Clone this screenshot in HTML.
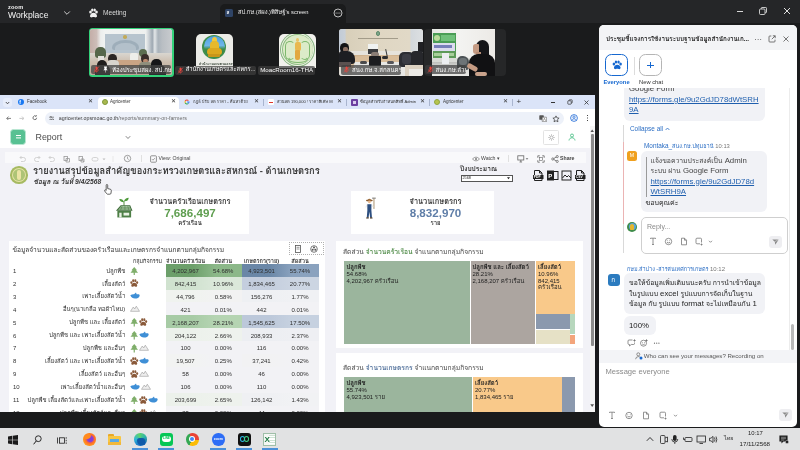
<!DOCTYPE html>
<html lang="th">
<head>
<meta charset="utf-8">
<title>Zoom Meeting</title>
<style>
html,body{margin:0;padding:0;}
body{position:relative;width:800px;height:450px;overflow:hidden;background:#1a1b1c;font-family:"Liberation Sans","Loma","Noto Sans Thai",sans-serif;}
#root{position:absolute;left:-4px;top:-4px;width:808px;height:458px;overflow:hidden;background:#1a1b1c;filter:blur(.35px);}
#stage{left:4px;top:4px;width:800px;height:450px;}
#root div,#root span.a,#root svg{position:absolute;box-sizing:border-box;}
.t{white-space:nowrap;line-height:1;}
.b{font-weight:bold;}
/* zoom top */
#ztitle{left:0;top:0;width:800px;height:23px;background:#252628;}
#ztab{left:220px;top:4px;width:126px;height:20px;background:#1a1b1c;border-radius:5px 5px 0 0;}
.vlabel{height:9.300px;background:rgba(63,63,63,.72);border-radius:2px;color:#fff;font-size:6.100px;overflow:hidden;}
.vlabel .t{top:1.600px;}
.scene{filter:blur(.55px);}
/* chrome */
#chrome{left:0;top:95px;width:595.300px;height:316.600px;background:#f2f2f7;overflow:hidden;}
#tabs{left:0;top:0;width:595px;height:14px;background:#dbe4f8;}
#tabs .t{font-size:4.5px;color:#333;top:5px;}
#tabs .x{font-size:5.6px;color:#333;top:4.2px;}
#tabs .sep{width:1px;height:7px;top:3.700px;background:#a9b5cf;}
#addr{left:0;top:14px;width:595px;height:17px;background:#fff;}
#pill{left:45.300px;top:3px;width:519px;height:12.500px;border-radius:7px;background:#edf1f9;}
#apphead{left:0;top:31px;width:590px;height:21.500px;background:#fff;}
/* chat */
#chat{left:599px;top:25px;width:198px;height:402px;background:#fff;border-radius:5px;overflow:hidden;}
#chead{left:0;top:0;width:198px;height:25px;background:#f3f4f6;}
.bub{background:#f1f2f6;border-radius:6px;}
.ct{font-size:7.8px;color:#2a2a2a;white-space:nowrap;line-height:1;}
.th{font-size:6.8px;}
.lnk{color:#1f5fae;text-decoration:underline;}
/* taskbar */
#task{left:0;top:428px;width:800px;height:22px;background:#e1e2e3;}
</style>
</head>
<body>
<div id="root">
<div id="stage">
<div style="left:-4px;top:-4px;width:808px;height:27px;background:#252628;"></div>
<div style="left:-4px;top:95px;width:6px;height:316.600px;background:linear-gradient(180deg,#dbe4f8 0,#dbe4f8 14px,#fff 14px,#fff 52.500px,#f2f2f7 52.500px,#f2f2f7 100%);"></div>
<div style="left:-4px;top:428px;width:808px;height:30px;background:#e1e2e3;"></div>
<!-- ===== Zoom title bar ===== -->
<div id="ztitle">
  <div class="t" style="left:8px;top:4.6px;font-size:5.6px;color:#f2f2f2;font-weight:bold;letter-spacing:.2px;">zoom</div>
  <div class="t" style="left:8px;top:10.800px;font-size:8.6px;color:#f5f5f5;">Workplace</div>
  <svg style="left:62.500px;top:9.500px" width="8" height="6" viewBox="0 0 8 6"><path d="M1.2 1.5 L4 4.3 L6.8 1.5" fill="none" stroke="#cfcfcf" stroke-width="1"/></svg>
  <svg style="left:88px;top:7.800px" width="11" height="11" viewBox="0 0 22 22"><g fill="#f0f0f0"><ellipse cx="5" cy="8" rx="2.6" ry="3.2"/><ellipse cx="17" cy="8" rx="2.6" ry="3.2"/><ellipse cx="8.6" cy="4" rx="2.4" ry="3"/><ellipse cx="13.4" cy="4" rx="2.4" ry="3"/><path d="M11 9.5c-4 0-7 3.5-7 6.6 0 2.6 2.4 3.2 4.2 2.6 1.2-.4 1.8-.6 2.8-.6s1.600.2 2.800.6c1.800.6 4.200 0 4.200-2.600 0-3.100-3-6.600-7-6.600z"/></g></svg>
  <div class="t" style="left:103px;top:9.800px;font-size:6.6px;color:#d8d8d8;">Meeting</div>
  <div id="ztab">
    <div style="left:5px;top:5px;width:8px;height:8px;border-radius:1.5px;background:#2f4466;"></div>
    <div class="t" style="left:6.6px;top:6.6px;font-size:4.5px;color:#fff;font-weight:bold;">ส</div>
    <div class="t" style="left:18px;top:5.800px;font-size:5.8px;color:#ececec;">สป.กษ.(สผง.)พิสิษฐ์'s screen</div>
    <svg style="left:113.300px;top:3.600px" width="10" height="10" viewBox="0 0 20 20"><circle cx="10" cy="10" r="8" fill="none" stroke="#e6e6e6" stroke-width="1.6"/><circle cx="6.200" cy="10" r="1.100" fill="#e6e6e6"/><circle cx="10" cy="10" r="1.100" fill="#e6e6e6"/><circle cx="13.800" cy="10" r="1.100" fill="#e6e6e6"/></svg>
  </div>
  <!-- window controls -->
  <div style="left:737px;top:10.500px;width:6px;height:1px;background:#d8d8d8;"></div>
  <svg style="left:758px;top:6px" width="10" height="10" viewBox="0 0 10 10"><rect x="1.500" y="3" width="5.5" height="5.500" rx="1" fill="none" stroke="#d8d8d8" stroke-width=".9"/><path d="M3.300 3V2.200q0-.7.700-.7h3.800q.7 0 .7.700v3.800q0 .7-.7.700h-.8" fill="none" stroke="#d8d8d8" stroke-width=".9"/></svg>
  <svg style="left:783px;top:7px" width="8" height="8" viewBox="0 0 8 8"><path d="M1 1L7 7M7 1L1 7" stroke="#e0e0e0" stroke-width="1"/></svg>
</div>

<!-- ===== video strip ===== -->
<!-- tile 1 (active speaker) -->
<div style="left:88.500px;top:28.200px;width:85px;height:48.500px;border-radius:3.500px;background:#33d27a;overflow:hidden;">
  <div style="left:1.300px;top:1.300px;width:82.400px;height:45.900px;border-radius:2.500px;overflow:hidden;background:#e8ebea;"><div class="scene" style="left:0;top:0;width:82.400px;height:45.900px;">
    <div style="left:0;top:0;width:82px;height:26px;background:linear-gradient(90deg,#c4aea8 0,#cdbdb8 8%,#eceeed 13%,#f1f3f2 18%,#eef0ef 68%,#c9cfd4 72%,#9ea8b2 76%,#e3e6e8 79%,#aab3bb 83%,#b9bec3 88%,#c8cbce 100%);"></div>
    <div style="left:15.500px;top:5px;width:39.500px;height:19.500px;background:#b7c4ce;"></div>
    <div style="left:22px;top:10.500px;width:27px;height:10px;background:#9aaab6;border-radius:13px 13px 2px 2px / 8px 8px 2px 2px;opacity:.85;"></div>
    <div style="left:25px;top:13.500px;width:21px;height:7px;background:#b3c0ca;border-radius:10px 10px 0 0 / 5px 5px 0 0;"></div>
    <div style="left:33.500px;top:6px;width:3.500px;height:3.500px;background:#c2aa58;border-radius:50%;"></div>
    <div style="left:0;top:24px;width:82px;height:22px;background:linear-gradient(180deg,#d9d6d0 0,#cdbfb0 40%,#b9a795 100%);"></div>
    <div style="left:5px;top:18px;width:11px;height:11px;background:#55664a;border-radius:5px 5px 3px 3px;"></div>
    <div style="left:8px;top:27px;width:6px;height:5px;background:#e3e1dc;"></div>
    <div style="left:49.500px;top:20px;width:8px;height:8px;background:#5c6e50;border-radius:4px;"></div>
    <div style="left:40.500px;top:23.500px;width:8px;height:12px;background:#eeeeea;border-radius:2px;"></div>
    <div style="left:24px;top:31px;width:28px;height:6px;background:#caa484;border-radius:3px;"></div>
    <div style="left:18.500px;top:25px;width:8.500px;height:8.500px;background:#2c2623;border-radius:50%;"></div>
    <div style="left:17px;top:31px;width:12px;height:9px;background:#d8d4cd;border-radius:4px 4px 0 0;"></div>
    <div style="left:7px;top:30.500px;width:10.500px;height:9px;background:#1f1d1c;border-radius:5px 5px 2px 2px;"></div>
    <div style="left:5px;top:36px;width:15px;height:10px;background:#3b3937;border-radius:5px 5px 0 0;"></div>
    <div style="left:51px;top:24.500px;width:8.500px;height:9px;background:#3a2e2a;border-radius:50%;"></div>
    <div style="left:53px;top:29.500px;width:5px;height:4px;background:#b98a6e;border-radius:2px;"></div>
    <div style="left:49px;top:33px;width:13px;height:9px;background:#8f8f7c;border-radius:4px 4px 0 0;"></div>
    <div style="left:61.500px;top:30px;width:11px;height:9px;background:#161618;border-radius:5px 5px 2px 2px;"></div>
    <div style="left:59px;top:36px;width:17px;height:10px;background:#2c2c2e;border-radius:6px 6px 0 0;"></div>
  </div></div>
  <div class="vlabel" style="left:2px;top:36.800px;width:80.500px;">
    <svg style="left:2px;top:1.200px" width="7" height="7" viewBox="0 0 14 14"><rect x="5" y="1" width="4" height="8" rx="2" fill="#e5463f"/><path d="M3 7a4 4 0 0 0 8 0M7 11v2" stroke="#e5463f" stroke-width="1.300" fill="none"/><path d="M2 13L12 1" stroke="#e5463f" stroke-width="1.400"/></svg>
    <svg style="left:11px;top:1.200px" width="7" height="7" viewBox="0 0 14 14"><path d="M4 1h6l-1 5 2.500 2.500h-9L5 6z M6.500 8.500h1V13h-1z" fill="#fff"/></svg>
    <div class="t" style="left:21.500px;">ห้องประชุมสผง. สป.กษ</div>
  </div>
</div>
<!-- tile 2 avatar -->
<div style="left:195.800px;top:33.900px;width:37.400px;height:34px;border-radius:5px 5px 0 0;background:#ecece7;overflow:hidden;">
  <div style="left:6.700px;top:.8px;width:24px;height:24px;border-radius:50%;background:#3f8f4c;"></div>
  <div style="left:8.200px;top:2.300px;width:21px;height:21px;border-radius:50%;background:linear-gradient(180deg,#4f9fe0 0,#6fb6ea 45%,#3f8f4c 62%,#2f7a3e 100%);"></div>
  <div style="left:16.200px;top:2.800px;width:5px;height:6px;border-radius:50% 50% 40% 40%;background:#efc83c;"></div>
  <div style="left:14.200px;top:7.500px;width:9px;height:9px;border-radius:4px 4px 2px 2px;background:#e6b92c;"></div>
  <div style="left:11.200px;top:14.500px;width:15px;height:7px;border-radius:4px 4px 3px 3px;background:#dca81f;"></div>
  <div style="left:12.700px;top:20.500px;width:12px;height:3px;border-radius:1px;background:#c9961a;"></div>
  <div class="t b" style="left:3px;top:28.800px;font-size:3.600px;color:#2c3a2c;">สำนักงานเกษตรและสหกรณ์</div>
</div>
<div class="vlabel" style="left:175.200px;top:65.500px;width:80.800px;">
  <svg style="left:2px;top:1.200px" width="7" height="7" viewBox="0 0 14 14"><rect x="5" y="1" width="4" height="8" rx="2" fill="#e5463f"/><path d="M3 7a4 4 0 0 0 8 0M7 11v2" stroke="#e5463f" stroke-width="1.300" fill="none"/><path d="M2 13L12 1" stroke="#e5463f" stroke-width="1.400"/></svg>
  <div class="t" style="left:10.500px;font-size:5.800px;">สำนักงานเกษตรและสหกร...</div>
</div>
<!-- tile 3 avatar -->
<div style="left:278.900px;top:33.900px;width:37.600px;height:34px;border-radius:5px 5px 0 0;background:#f1f1ec;overflow:hidden;">
  <div style="left:1.2px;top:-2.0px;width:35.2px;height:35.2px;border-radius:50%;background:#84b47d;"></div>
  <div style="left:2.1px;top:-1.1px;width:33.4px;height:33.4px;border-radius:50%;background:#f4f4ea;"></div>
  <div style="left:3.1px;top:-0.1px;width:31.4px;height:31.4px;border-radius:50%;background:#8cbd80;"></div>
  <div style="left:3.9px;top:0.7px;width:29.8px;height:29.8px;border-radius:50%;background:#dcebc8;"></div>
  <div style="left:6px;top:7px;width:10px;height:19px;border-radius:6px;border:1.600px solid #7db86d;border-right-color:transparent;"></div>
  <div style="left:21.600px;top:7px;width:10px;height:19px;border-radius:6px;border:1.600px solid #7db86d;border-left-color:transparent;"></div>
  <div style="left:8.800px;top:22px;width:20px;height:7px;border-radius:50%;border:1.400px solid #7db86d;border-top-color:transparent;"></div>
  <div style="left:17px;top:4.500px;width:3.600px;height:4px;border-radius:50%;background:#e7c46a;"></div>
  <div style="left:15.800px;top:8px;width:6px;height:9px;border-radius:2px;background:#e9b850;"></div>
  <div style="left:16.300px;top:16px;width:5px;height:10px;border-radius:1px 1px 2px 2px;background:#e2a83e;"></div>
</div>
<div class="vlabel" style="left:258px;top:65.500px;width:56.800px;">
  <div class="t" style="left:2.200px;font-size:6.200px;">MoacRoom16-THA</div>
</div>
<!-- tile 4 video -->
<div style="left:339px;top:29px;width:83.500px;height:47.300px;border-radius:3px;overflow:hidden;background:#ded5c2;"><div class="scene" style="left:0;top:0;width:83.500px;height:47.300px;">
  <div style="left:0;top:0;width:83.500px;height:22px;background:linear-gradient(90deg,#c2cbd6 0,#c9d0d8 7%,#d8cfba 9%,#dfd6c2 40%,#e1d9c7 84%,#d3d8dc 86%,#dde0e2 100%);"></div>
  <div style="left:0;top:21.500px;width:83.500px;height:5px;background:#e6e3dc;"></div>
  <div style="left:36.700px;top:2.200px;width:4.500px;height:4.500px;border-radius:50%;background:#7ea58a;border:.6px solid #5f8a6c;"></div>
  <div style="left:19.300px;top:8.600px;width:39.500px;height:1.300px;background:#8f8877;opacity:.75;"></div>
  <div style="left:28.500px;top:15px;width:10.500px;height:5.200px;background:#f0f2f1;"></div>
  <div style="left:28.500px;top:20px;width:10.500px;height:5px;background:#3c3d40;"></div>
  <div style="left:0;top:26px;width:83.500px;height:22px;background:linear-gradient(180deg,#cdb08c 0,#d9bf9e 35%,#dcd6cb 60%,#e3e2df 100%);"></div>
  <div style="left:8px;top:25.500px;width:64px;height:13px;border-radius:50% 50% 0 0 / 40% 40% 0 0;background:#d9bd9a;"></div>
  <div style="left:14px;top:33px;width:30px;height:15px;background:#e6e6e3;transform:skewX(-12deg);"></div>
  <div style="left:46px;top:33px;width:30px;height:15px;background:#e8e8e5;transform:skewX(22deg);"></div>
  <div style="left:32px;top:22.500px;width:8px;height:5px;border-radius:3px;background:#8a7d75;"></div>
  <div style="left:29.700px;top:26.700px;width:12.800px;height:10px;background:#1c1d20;border-radius:1px;"></div>
  <div style="left:43px;top:26.800px;width:6px;height:2.800px;border-radius:1.500px;background:#2b2c2f;"></div>
  <div style="left:46.500px;top:20px;width:.9px;height:8px;background:#3a3a3a;transform:rotate(-12deg);"></div>
  <div style="left:21px;top:32px;width:7px;height:3px;border-radius:1.500px;background:#4a4a4c;"></div>
  <div style="left:48px;top:32px;width:7px;height:3px;border-radius:1.500px;background:#56565a;"></div>
  <div style="left:79px;top:12.600px;width:4.500px;height:10px;background:#1f2023;"></div>
  <div style="left:60px;top:23px;width:15px;height:15px;border-radius:5px 5px 2px 3px;background:#2b2d33;"></div>
  <div style="left:63px;top:25px;width:9px;height:10px;border-radius:3px;background:#3a3c44;"></div>
  <div style="left:72px;top:21.500px;width:11.500px;height:15px;border-radius:4px 2px 0 2px;background:#26272b;"></div>
  <div style="left:66px;top:36px;width:17.500px;height:11.300px;background:#dcd2c2;"></div>
  <div style="left:70px;top:40px;width:13.500px;height:7.300px;background:#eceae6;"></div>
  <div style="left:.5px;top:14px;width:9.500px;height:9.500px;border-radius:50%;background:#141416;"></div>
  <div style="left:4px;top:18px;width:5px;height:5px;border-radius:2px;background:#8a6f62;"></div>
  <div style="left:0;top:21.500px;width:16px;height:13.500px;border-radius:3px 8px 3px 0;background:#1d1e22;"></div>
  <div style="left:0;top:33px;width:12px;height:5px;background:#5a5150;"></div>
  </div>
  <div class="vlabel" style="left:1.600px;top:36.300px;width:60.500px;">
    <svg style="left:2px;top:1.200px" width="7" height="7" viewBox="0 0 14 14"><rect x="5" y="1" width="4" height="8" rx="2" fill="#e5463f"/><path d="M3 7a4 4 0 0 0 8 0M7 11v2" stroke="#e5463f" stroke-width="1.300" fill="none"/><path d="M2 13L12 1" stroke="#e5463f" stroke-width="1.400"/></svg>
    <div class="t" style="left:11.500px;">สนง.กษ.จ.สกลนคร</div>
  </div>
</div>
<!-- tile 5 video -->
<div style="left:423.700px;top:28.900px;width:82px;height:47.400px;border-radius:4px;background:#262728;"></div>
<div style="left:432.200px;top:28.900px;width:63px;height:47.300px;overflow:hidden;background:#f0f0ee;"><div class="scene" style="left:0;top:0;width:63px;height:47.300px;">
  <div style="left:0;top:0;width:63px;height:47.300px;background:linear-gradient(90deg,#e6e9e3 0,#f3f3f1 45%,#eceae6 100%);"></div>
  <div style="left:.6px;top:4px;width:23.200px;height:25.500px;background:#4a9d55;"></div>
  <div style="left:1.500px;top:6.500px;width:6px;height:6px;border-radius:50%;background:#b9dc9a;"></div>
  <div style="left:9px;top:6.500px;width:13.500px;height:5.500px;background:#6fc07a;"></div>
  <div style="left:.6px;top:13.800px;width:22px;height:8.600px;background:#dcdcef;"></div>
  <div style="left:2px;top:16.500px;width:18px;height:2.600px;background:#5560a8;opacity:.75;"></div>
  <div style="left:.6px;top:22.400px;width:23.200px;height:7px;background:#5d9a58;"></div>
  <div style="left:2px;top:24px;width:20px;height:3px;background:#a8cf9a;"></div>
  <div style="left:0;top:29.500px;width:40px;height:4px;background:#d9dbd6;"></div>
  <div style="left:0;top:33px;width:44px;height:14.300px;background:linear-gradient(180deg,#bfc0bc 0,#d9dad7 40%,#e9e9e6 100%);"></div>
  <div style="left:9.800px;top:24px;width:7.500px;height:11.500px;background:#eceef0;"></div>
  <div style="left:25px;top:27px;width:12px;height:14.500px;border-radius:5px 6px 3px 3px;background:#4c5255;"></div>
  <div style="left:27px;top:29px;width:8px;height:7px;border-radius:3px;background:#6d7477;"></div>
  <div style="left:43.400px;top:11.400px;width:13px;height:20.500px;border-radius:7px 7px 4px 6px;background:#151518;"></div>
  <div style="left:41px;top:15px;width:5.500px;height:10px;border-radius:2.500px 1px 2px 3px;background:#c59b83;"></div>
  <div style="left:43.500px;top:23px;width:5px;height:5px;background:#b78d76;"></div>
  <div style="left:37px;top:25.400px;width:26px;height:22px;border-radius:9px 9px 0 0;background:#111113;"></div>
  <div style="left:35px;top:36.500px;width:11px;height:4.500px;border-radius:2px;background:#c59b83;transform:rotate(28deg);"></div>
  <div style="left:43px;top:43px;width:12px;height:4.300px;border-radius:2px;background:#c9a38c;"></div>
</div></div>
<div class="vlabel" style="left:424.900px;top:65.200px;width:41.600px;">
  <svg style="left:2px;top:1.200px" width="7" height="7" viewBox="0 0 14 14"><rect x="5" y="1" width="4" height="8" rx="2" fill="#e5463f"/><path d="M3 7a4 4 0 0 0 8 0M7 11v2" stroke="#e5463f" stroke-width="1.300" fill="none"/><path d="M2 13L12 1" stroke="#e5463f" stroke-width="1.400"/></svg>
  <div class="t" style="left:10.500px;">สนง.กษ.ลำป...</div>
</div>
<!-- ===== Chrome window ===== -->
<div id="chrome">
 <div id="tabs">
  <div style="left:2.700px;top:3px;width:9.600px;height:8.500px;border-radius:3px;background:#e7edfb;"></div>
  <svg style="left:5px;top:5.6px" width="5" height="4" viewBox="0 0 5 4"><path d="M.8 1L2.500 2.800 4.200 1" fill="none" stroke="#333" stroke-width=".8"/></svg>
  <!-- tab1 -->
  <div style="left:17.500px;top:4.1px;width:6px;height:6px;border-radius:50%;background:#1877f2;"></div>
  <div class="t" style="left:19.300px;top:4.9px;font-size:5px;color:#fff;font-weight:bold;">f</div>
  <div class="t" style="left:27px;">Facebook</div>
  <div class="t x" style="left:88px;">✕</div>
  <!-- tab2 active -->
  <div style="left:98px;top:1.500px;width:81px;height:12.500px;background:#fff;border-radius:4px 4px 0 0;"></div>
  <div style="left:101.500px;top:4.1px;width:6px;height:6px;border-radius:50%;background:#a9b84e;border:1px solid #7f9a3c;"></div>
  <div class="t" style="left:110px;">Agricenter</div>
  <div class="t x" style="left:171px;">✕</div>
  <!-- tab3 -->
  <svg style="left:184px;top:4.1px" width="6" height="6" viewBox="0 0 12 12"><path d="M6 1a5 5 0 0 1 3.500 1.400L8 4a3 3 0 0 0-2-.8z" fill="#ea4335"/><path d="M6 1a5 5 0 0 0-4.400 2.700L3.400 5A3 3 0 0 1 6 3.200z" fill="#ea4335"/><path d="M1.600 3.700a5 5 0 0 0 0 4.600L3.400 7a3 3 0 0 1 0-2z" fill="#fbbc05"/><path d="M1.600 8.300A5 5 0 0 0 9.400 9.700L7.800 8.300A3 3 0 0 1 3.400 7z" fill="#34a853"/><path d="M11 6.100q0-.6-.1-1H6v2h2.800a2.400 2.400 0 0 1-1 1.300l1.600 1.300A5 5 0 0 0 11 6.100z" fill="#4285f4"/></svg>
  <div class="t" style="left:193px;font-size:4.100px;">กฎธ์ ปรับ ลด ราคา - ค้นหาด้วย</div>
  <div class="t x" style="left:254px;">✕</div>
  <div class="sep" style="left:263px;"></div>
  <!-- tab4 -->
  <div style="left:268px;top:4.1px;width:6px;height:6px;background:#fff;border-radius:1px;"></div>
  <div style="left:269px;top:6.6px;width:4px;height:1px;background:#e0342a;"></div>
  <div class="t" style="left:277px;font-size:4.100px;">ส่วนลด 190,000 ! ราคาพิเศษ M</div>
  <div class="t x" style="left:337px;">✕</div>
  <div class="sep" style="left:346px;"></div>
  <!-- tab5 -->
  <div style="left:351px;top:4.1px;width:6.500px;height:6.500px;background:#6b3fa0;border-radius:1px;"></div>
  <div style="left:352.500px;top:5.6px;width:3.500px;height:3.500px;background:#d9c9ee;"></div>
  <div class="t" style="left:360px;font-size:4.100px;">ข้อมูลสำหรับกำหนดสิทธิ์ Admin</div>
  <div class="t x" style="left:420px;">✕</div>
  <div class="sep" style="left:429px;"></div>
  <!-- tab6 -->
  <div style="left:434px;top:4.1px;width:6px;height:6px;border-radius:50%;background:#b7c451;border:1px solid #8fa640;"></div>
  <div class="t" style="left:443px;">Agricenter</div>
  <div class="t x" style="left:503px;">✕</div>
  <div class="sep" style="left:512px;"></div>
  <div class="t" style="left:516.500px;top:3.1px;font-size:8px;color:#333;">+</div>
  <!-- win controls -->
  <div style="left:551px;top:7.1px;width:4px;height:1px;background:#333;"></div>
  <svg style="left:567px;top:4.1px" width="6" height="6" viewBox="0 0 6 6"><rect x=".8" y="1.800" width="3.400" height="3.400" rx=".6" fill="none" stroke="#333" stroke-width=".7"/><path d="M2 1.800V1.300q0-.5.500-.5h2.200q.5 0 .5.500v2.200q0 .5-.5.500H4.200" fill="none" stroke="#333" stroke-width=".7"/></svg>
  <svg style="left:584px;top:4.6px" width="5" height="5" viewBox="0 0 5 5"><path d="M.5.500L4.500 4.500M4.500.500L.5 4.500" stroke="#333" stroke-width=".8"/></svg>
 </div>
 <div id="addr">
  <svg style="left:5.800px;top:6.600px" width="5.600" height="4.800" viewBox="0 0 7 6"><path d="M6.500 3H1M3.200.7L.9 3l2.300 2.300" fill="none" stroke="#666" stroke-width="1"/></svg>
  <svg style="left:18.800px;top:6.600px" width="5.600" height="4.800" viewBox="0 0 7 6"><path d="M.5 3H6M3.800.7L6.100 3 3.800 5.300" fill="none" stroke="#bbb" stroke-width="1"/></svg>
  <svg style="left:32.200px;top:6.200px" width="5.600" height="5.600" viewBox="0 0 7 7"><path d="M5.800 3.500a2.300 2.300 0 1 1-.7-1.700" fill="none" stroke="#444" stroke-width=".9"/><path d="M4 1.500h1.800V-.2z" fill="#444"/></svg>
  <div id="pill">
    <svg style="left:3.400px;top:3.600px" width="5.600" height="4.800" viewBox="0 0 7 6"><path d="M.5 1.500h6M.5 4.500h6" stroke="#555" stroke-width=".8"/><circle cx="2.300" cy="1.500" r="1" fill="#edf1f9" stroke="#444" stroke-width=".7"/><circle cx="4.700" cy="4.500" r="1" fill="#edf1f9" stroke="#444" stroke-width=".7"/></svg>
    <div class="t" style="left:13.500px;top:3.600px;font-size:5.300px;color:#3a3a3a;">agricenter.opsmoac.go.th<span style="color:#6a6a6a">/reports/summary-on-farmers</span></div>
    <svg style="left:494px;top:3px" width="8" height="7" viewBox="0 0 8 7"><rect x=".3" y=".3" width="4.500" height="4.500" rx=".6" fill="#555"/><rect x="3.200" y="2.200" width="4.500" height="4.500" rx=".6" fill="#fff" stroke="#555" stroke-width=".6"/><path d="M4.300 5.800L5.450 3.200 6.600 5.800" fill="none" stroke="#555" stroke-width=".5"/></svg>
    <svg style="left:507px;top:2.500px" width="8" height="8" viewBox="0 0 16 16"><path d="M8 1.800l1.900 4 4.300.5-3.200 3 .9 4.300L8 11.400l-3.900 2.200.9-4.300-3.200-3 4.300-.5z" fill="none" stroke="#333" stroke-width="1.400" stroke-linejoin="round"/></svg>
  </div>
  <svg style="left:570px;top:5px" width="8" height="8" viewBox="0 0 16 16"><circle cx="8" cy="8" r="6.800" fill="none" stroke="#1a66d6" stroke-width="1.600"/><circle cx="8" cy="6.300" r="2.300" fill="none" stroke="#1a66d6" stroke-width="1.400"/><path d="M3.500 12.800c1-2.400 2.700-3 4.500-3s3.500.6 4.500 3" fill="none" stroke="#1a66d6" stroke-width="1.400"/></svg>
  <div style="left:586.500px;top:5.500px;width:1px;height:1px;background:#444;box-shadow:0 2.500px 0 #444,0 5px 0 #444;"></div>
 </div>
 <div id="apphead">
  <div style="left:10px;top:3px;width:16.400px;height:16.200px;border-radius:3.500px;background:#58c193;border:1.200px solid #b9e6d2;"></div>
  <div style="left:15.500px;top:9.300px;width:5.500px;height:1.200px;background:#fff;box-shadow:0 2.400px 0 #fff;"></div>
  <div class="t" style="left:35.500px;top:7.300px;font-size:8.900px;color:#4a4a4a;">Report</div>
  <svg style="left:124.500px;top:9px" width="6" height="5" viewBox="0 0 6 5"><path d="M.8 1.200L3 3.500 5.200 1.200" fill="none" stroke="#666" stroke-width=".8"/></svg>
  <div style="left:543px;top:4px;width:15.500px;height:14.500px;border:1px solid #e3e3e3;border-radius:1.500px;background:#fff;"></div>
  <svg style="left:547.500px;top:8px" width="7" height="7" viewBox="0 0 14 14"><circle cx="7" cy="7" r="3" fill="none" stroke="#999" stroke-width="1.400"/><g stroke="#999" stroke-width="1.500"><path d="M7 .8v2M7 11.200v2M.8 7h2M11.200 7h2M2.600 2.600l1.400 1.400M10 10l1.400 1.400M2.600 11.400L4 10M10 4l1.400-1.400"/></g></svg>
  <svg style="left:567.500px;top:7px" width="8" height="8" viewBox="0 0 16 16"><circle cx="8" cy="5" r="3" fill="none" stroke="#3dbb7e" stroke-width="1.600"/><path d="M2 15c.5-4 3-5.500 6-5.500s5.500 1.500 6 5.500" fill="none" stroke="#3dbb7e" stroke-width="1.600"/></svg>
 </div>
 <!-- page scrollbar -->
 <div style="left:590px;top:31px;width:5px;height:286px;background:#f6f6f6;"></div>
 <div style="left:590.800px;top:39px;width:3.400px;height:212px;background:#8b8b8b;border-radius:1px;"></div>
 <svg style="left:590.300px;top:33.500px" width="4.400" height="3.500" viewBox="0 0 4.400 3.500"><path d="M.3 3.200L2.200.5 4.100 3.200z" fill="#555"/></svg>
 <svg style="left:590.300px;top:309px" width="4.400" height="3.500" viewBox="0 0 4.400 3.500"><path d="M.3.300L2.200 3 4.100.3z" fill="#555"/></svg>
 <!-- ===== Tableau toolbar ===== -->
 <div style="left:5px;top:57.300px;width:580.500px;height:11px;background:#f9f9fb;"></div>

 <svg style="left:18px;top:59.600px" width="100" height="8" viewBox="0 0 100 8">
  <g fill="none" stroke="#c9c9c9" stroke-width=".8">
   <path d="M2 2.500h3.500a2 2 0 0 1 0 4H3M3.500 1L2 2.500 3.500 4"/>
   <path d="M22 2.500h-3.500a2 2 0 0 0 0 4H21M20.500 1L22 2.500 20.500 4"/>
   <path d="M31 2.500h3.500a2 2 0 0 1 0 4H32M32.500 1L31 2.500 32.500 4"/>
  </g>
  <g fill="none" stroke="#999" stroke-width=".8">
   <rect x="46" y="1.500" width="3.500" height="4"/><path d="M48 3.500h3.500v3.500H48z"/>
   <rect x="61" y="1.500" width="3.500" height="4"/><path d="M63 4h3v3h-3zM65.500 5.500v1.500"/>
  </g>
  <g fill="none" stroke="#c9c9c9" stroke-width=".8"><rect x="74" y="2.500" width="6" height="3.500" rx="1.700"/></g>
  <path d="M84.500 3.500l1.500 1.800 1.500-1.800z" fill="#bbb"/>
  <path d="M95 1v6" stroke="#ddd" stroke-width=".6"/>
 </svg>
 <svg style="left:123px;top:59.200px" width="9" height="9" viewBox="0 0 9 9"><circle cx="4.500" cy="4.500" r="3.200" fill="none" stroke="#888" stroke-width=".8"/><path d="M4.500 2.600v2.100l1.300.8" fill="none" stroke="#888" stroke-width=".7"/></svg>
 <div style="left:141px;top:59.500px;width:1px;height:7px;background:#e0e0e0;"></div>
 <svg style="left:150px;top:59.700px" width="7" height="8" viewBox="0 0 7 8"><rect x=".6" y=".8" width="5.800" height="6.400" rx=".8" fill="none" stroke="#777" stroke-width=".8"/><path d="M2 4.200l1 1 1.800-2" fill="none" stroke="#777" stroke-width=".7"/></svg>
 <div class="t" style="left:158.500px;top:61.100px;font-size:5.200px;color:#444;">View: Original</div>
 <!-- right side toolbar -->
 <svg style="left:472px;top:60.800px" width="8" height="6" viewBox="0 0 8 6"><path d="M.5 3Q4-.8 7.500 3 4 6.800.5 3z" fill="none" stroke="#777" stroke-width=".7"/><circle cx="4" cy="3" r="1" fill="#777"/></svg>
 <div class="t" style="left:481px;top:61.100px;font-size:5.200px;color:#444;">Watch ▾</div>
 <div style="left:508px;top:59.500px;width:1px;height:7px;background:#e0e0e0;"></div>
 <svg style="left:517px;top:59.800px" width="12" height="8" viewBox="0 0 12 8"><rect x=".8" y=".8" width="6" height="4.200" fill="none" stroke="#666" stroke-width=".8"/><path d="M2.500 7h2.600M3.800 5v2" stroke="#666" stroke-width=".8"/><path d="M8.700 3.200l1.300 1.600 1.300-1.600z" fill="#666"/></svg>
 <svg style="left:537px;top:59.800px" width="8" height="8" viewBox="0 0 8 8"><path d="M.8 2.800V.8h2M5.200.8h2v2M7.200 5.200v2h-2M2.800 7.200h-2v-2" fill="none" stroke="#666" stroke-width=".8"/><rect x="2.600" y="2.600" width="2.800" height="2.800" fill="none" stroke="#666" stroke-width=".6"/></svg>
 <svg style="left:551px;top:59.800px" width="8" height="8" viewBox="0 0 8 8"><circle cx="1.800" cy="4" r="1.100" fill="none" stroke="#555" stroke-width=".7"/><circle cx="6.200" cy="1.600" r="1.100" fill="none" stroke="#555" stroke-width=".7"/><circle cx="6.200" cy="6.400" r="1.100" fill="none" stroke="#555" stroke-width=".7"/><path d="M2.800 3.500l2.400-1.400M2.800 4.500l2.400 1.400" stroke="#555" stroke-width=".7"/></svg>
 <div class="t b" style="left:560px;top:61.100px;font-size:5.200px;color:#444;">Share</div>

 <!-- ===== title ===== -->
 <div style="left:10px;top:71px;width:17.500px;height:17.500px;border-radius:50%;background:#a6ba62;"></div>
 <div style="left:11.500px;top:72.500px;width:14.500px;height:14.500px;border-radius:50%;background:#e6e3a6;"></div>
 <div style="left:13px;top:74px;width:11.500px;height:11.500px;border-radius:50%;background:#aec476;"></div>
 <div style="left:17px;top:74.500px;width:3.500px;height:10.500px;border-radius:2px;background:#ebe4a4;"></div>
 <div class="t b" style="left:33px;top:72.300px;font-size:9.320px;color:#3a3a3a;">รายงานสรุปข้อมูลสำคัญของกระทรวงเกษตรและสหกรณ์ - ด้านเกษตรกร</div>
 <div class="t b" style="left:33.500px;top:83.500px;font-size:6.700px;color:#333;font-style:italic;">ข้อมูล ณ วันที่ 9/4/2568</div>

 <!-- filter -->
 <div class="t b" style="left:460px;top:71px;font-size:6.600px;color:#333;">ปีงบประมาณ</div>
 <div style="left:460.500px;top:79.500px;width:52px;height:7.500px;background:#fff;border:1px solid #555;"></div>
 <div class="t" style="left:462.500px;top:81.800px;font-size:3.800px;color:#222;">2568</div>
 <svg style="left:507px;top:82.200px" width="3" height="2.500" viewBox="0 0 3 2.500"><path d="M0 .3h3L1.500 2.300z" fill="#222"/></svg>
 <!-- export icons -->
 <svg style="left:532px;top:74px" width="56" height="13" viewBox="0 0 56 13">
  <g fill="none" stroke="#222" stroke-width="1">
   <path d="M2.500 1.500h5l2.500 2.500v7.500h-7.500z"/><path d="M7.500 1.500v2.500h2.500"/>
   <path d="M44.500 1.500h5l2.500 2.500v7.500h-7.500z"/><path d="M49.500 1.500v2.500h2.500"/>
   <rect x="30" y="2" width="9" height="9"/><path d="M30.500 9l2.500-3 2 2 1.500-1.500 2.500 2.500"/>
  </g>
  <rect x="1" y="6" width="10.500" height="4" fill="#222"/>
  <rect x="43" y="6" width="10.500" height="4" fill="#222"/>
  <rect x="15" y="1.500" width="7" height="10" fill="#222"/><rect x="21" y="2.500" width="5" height="8" fill="none" stroke="#222" stroke-width="1"/>
  <text x="16.300" y="9" font-size="6" font-weight="bold" fill="#fff" font-family="Liberation Sans,sans-serif">P</text>
  <text x="1.800" y="9.300" font-size="3.300" font-weight="bold" fill="#fff" font-family="Liberation Sans,sans-serif">PDF</text>
  <text x="43.800" y="9.300" font-size="3.300" font-weight="bold" fill="#fff" font-family="Liberation Sans,sans-serif">CSV</text>
 </svg>

 <!-- ===== KPI cards ===== -->
 <div style="left:104.500px;top:96px;width:144px;height:42.500px;background:#fff;">
  <svg style="left:10.500px;top:6px" width="18" height="21" viewBox="0 0 19 22">
   <path d="M9.500 9V4" stroke="#4f8a3a" stroke-width="1"/>
   <path d="M9.500 5.500Q5.500 5.500 4.500 2 8.500 1.500 9.500 5.500zM9.500 4.500Q10.500 1 14.500.8 14.200 4.800 9.500 4.500z" fill="#4f9a3c"/>
   <path d="M1 14.500L6 8.500h10l2.500 6z" fill="#3f6b3a"/><path d="M6.500 9.500h8.800l1.600 4H3.300z" fill="#9fc39a"/>
   <path d="M7.500 9.500l-1.500 4M10.500 9.500v4M13.500 9.500l1 4M4.500 11.500h11.500" stroke="#3f6b3a" stroke-width=".5"/>
   <rect x="2.500" y="14.500" width="14.500" height="7" fill="#4d7f46"/>
   <rect x="4.500" y="16.500" width="2.500" height="5" fill="#e9f1e4"/><rect x="9" y="16.500" width="6" height="3" fill="#e9f1e4"/>
  </svg>
  <div class="t b" style="left:0;width:171px;text-align:center;top:6.500px;font-size:7.400px;color:#3a3a3a;">จำนวนครัวเรือนเกษตรกร</div>
  <div class="t b" style="left:0;width:171px;text-align:center;top:15.500px;font-size:11.600px;color:#5f9e50;">7,686,497</div>
  <div class="t b" style="left:0;width:171px;text-align:center;top:28.500px;font-size:6px;color:#333;">ครัวเรือน</div>
 </div>
 <div style="left:350.500px;top:96px;width:143.500px;height:42.500px;background:#fff;">
  <svg style="left:14px;top:5.800px" width="11.500" height="22" viewBox="0 0 12 24">
   <path d="M9.500 1v12" stroke="#8a6a3a" stroke-width=".8"/><path d="M8 1.200h3M8 .6v1.600M9.500.6v1.600M11 .6v1.600" stroke="#777" stroke-width=".6"/>
   <ellipse cx="4.500" cy="3.800" rx="3.600" ry="1" fill="#8a5a2e"/><path d="M2.500 3.500Q4.500.5 6.500 3.500z" fill="#9a6a38"/>
   <circle cx="4.500" cy="5.300" r="1.600" fill="#e8b98f"/>
   <path d="M1.800 7.500h5.400l1.800 3-1 .6-1.200-1.600V13H2.200V9.500L1 11.800l-1-.5z" fill="#ececec"/>
   <path d="M2.300 8h4.400v6.500l.6 7.500H5.300l-.8-6-.8 6H1.700l.6-7.500z" fill="#2d4f80"/>
   <path d="M1.400 22h2.400v1.400H1zM5.200 22h2.400l.4 1.400H5.200z" fill="#3a2a1a"/>
  </svg>
  <div class="t b" style="left:0;width:170px;text-align:center;top:6.500px;font-size:7.400px;color:#3a3a3a;">จำนวนเกษตรกร</div>
  <div class="t b" style="left:0;width:170px;text-align:center;top:15.500px;font-size:11.600px;color:#5f7ea8;">8,832,970</div>
  <div class="t b" style="left:0;width:170px;text-align:center;top:28.500px;font-size:6px;color:#333;">ราย</div>
 </div>
 <!-- cursor -->
 <svg style="left:103.500px;top:88.500px" width="8" height="11" viewBox="0 0 8 11"><path d="M2.200 6.500V1.300q0-.8.750-.8.750 0 .75.800V4.600l2.500.6q1.200.3 1.100 1.500L7 9.200q-.1 1-1.100 1H3.600q-.6 0-1-.6L.6 6.900q-.3-.7.300-1 .6-.2 1.300.6z" fill="#fff" stroke="#222" stroke-width=".7"/></svg>
 <!-- ===== table card ===== -->
 <div style="left:9px;top:146px;width:315.800px;height:171px;background:#fff;overflow:hidden;">
  <div class="t" style="left:3.500px;top:5.800px;font-size:6.550px;color:#333;">ข้อมูลจำนวนและสัดส่วนของครัวเรือนและเกษตรกรจำแนกตามกลุ่มกิจกรรม</div>
  <div style="left:280px;top:1px;width:34.500px;height:12.500px;border:1px dotted #b0b0b0;"></div>
  <svg style="left:286px;top:3.500px" width="6" height="8" viewBox="0 0 6 8"><rect x=".5" y=".5" width="5" height="7" fill="none" stroke="#555" stroke-width=".8"/><path d="M1.500 2.300h3M1.500 4h3" stroke="#555" stroke-width=".6"/></svg>
  <svg style="left:301px;top:3.500px" width="8" height="8" viewBox="0 0 8 8"><circle cx="4" cy="4" r="3.300" fill="none" stroke="#555" stroke-width=".8"/><circle cx="4" cy="2.600" r="1" fill="#555"/><circle cx="2.700" cy="4.800" r="1" fill="#555"/><circle cx="5.300" cy="4.800" r="1" fill="#555"/></svg>
  <!-- row 1 -->
  <div style="left:157px;top:22.70px;width:75.5px;height:13.03px;background:linear-gradient(90deg,#6c9f6a 0,#6c9f6a 35%,#8cb889 65%,#8cb889 100%);"></div>
  <div style="left:232.5px;top:22.70px;width:77px;height:13.03px;background:linear-gradient(90deg,#6a87a7 0,#6a87a7 35%,#8aa2be 65%,#8aa2be 100%);"></div>
  <div class="t" style="left:4px;top:26.90px;font-size:6.0px;color:#333;">1</div>
  <div class="t" style="left:0;width:116.300px;text-align:right;top:26.60px;font-size:6.0px;color:#333;">ปลูกพืช</div>
  <svg style="left:121px;top:25.5px" width="8.5" height="8.5" viewBox="0 0 7 8" preserveAspectRatio="none"><path d="M3.500 0L5.800 3H4.900L6.600 5.500H4V8H3V5.500H.4L2.100 3H1.200z" fill="#7fae6a"/></svg>
  <div class="t" style="left:157px;width:39px;text-align:center;top:26.90px;font-size:6.0px;color:#2f2f2f;">4,202,967</div>
  <div class="t" style="left:196px;width:36.5px;text-align:center;top:26.90px;font-size:6.0px;color:#2f2f2f;">54.68%</div>
  <div class="t" style="left:232.5px;width:40px;text-align:center;top:26.90px;font-size:6.0px;color:#2f2f2f;">4,923,501</div>
  <div class="t" style="left:272.5px;width:37px;text-align:center;top:26.90px;font-size:6.0px;color:#2f2f2f;">55.74%</div>
  <!-- row 2 -->
  <div style="left:157px;top:35.63px;width:75.5px;height:13.03px;background:linear-gradient(90deg,#d0e2cf 0,#d0e2cf 35%,#dbe8da 65%,#dbe8da 100%);"></div>
  <div style="left:232.5px;top:35.63px;width:77px;height:13.03px;background:linear-gradient(90deg,#c4cede 0,#c4cede 35%,#ccd5e2 65%,#ccd5e2 100%);"></div>
  <div class="t" style="left:4px;top:39.83px;font-size:6.0px;color:#333;">2</div>
  <div class="t" style="left:0;width:116.300px;text-align:right;top:39.53px;font-size:6.0px;color:#333;">เลี้ยงสัตว์</div>
  <svg style="left:121px;top:38.43px" width="8.5" height="8.5" viewBox="0 0 8 8"><g fill="#8a5a3a"><ellipse cx="1.300" cy="3.300" rx="1" ry="1.300"/><ellipse cx="6.700" cy="3.300" rx="1" ry="1.300"/><ellipse cx="3" cy="1.600" rx="1" ry="1.400"/><ellipse cx="5" cy="1.600" rx="1" ry="1.400"/><path d="M4 3.600c-1.600 0-2.800 1.400-2.800 2.600 0 1.100 1 1.300 1.700 1 .5-.2.700-.3 1.100-.3s.6.100 1.100.3c.7.300 1.700.1 1.700-1 0-1.200-1.200-2.600-2.800-2.600z"/></g></svg>
  <div class="t" style="left:157px;width:39px;text-align:center;top:39.83px;font-size:6.0px;color:#2f2f2f;">842,415</div>
  <div class="t" style="left:196px;width:36.5px;text-align:center;top:39.83px;font-size:6.0px;color:#2f2f2f;">10.96%</div>
  <div class="t" style="left:232.5px;width:40px;text-align:center;top:39.83px;font-size:6.0px;color:#2f2f2f;">1,834,465</div>
  <div class="t" style="left:272.5px;width:37px;text-align:center;top:39.83px;font-size:6.0px;color:#2f2f2f;">20.77%</div>
  <!-- row 3 -->
  <div style="left:157px;top:48.56px;width:75.5px;height:13.03px;background:linear-gradient(90deg,#f0f3ef 0,#f0f3ef 35%,#f2f2f2 65%,#f2f2f2 100%);"></div>
  <div style="left:232.5px;top:48.56px;width:77px;height:13.03px;background:linear-gradient(90deg,#eef0f3 0,#eef0f3 35%,#f0f1f4 65%,#f0f1f4 100%);"></div>
  <div class="t" style="left:4px;top:52.76px;font-size:6.0px;color:#333;">3</div>
  <div class="t" style="left:0;width:116.300px;text-align:right;top:52.46px;font-size:6.0px;color:#333;">เพาะเลี้ยงสัตว์น้ำ</div>
  <svg style="left:121px;top:51.36px" width="10" height="7" viewBox="0 0 10 7"><path d="M.3 3.200Q2.500 2 4 2.300L6 .6l.6 1.700h2.300Q10 2.800 9.600 4 8.500 6.600 5 6.600 1.800 6.400.3 3.200z" fill="#3f8fd6"/></svg>
  <div class="t" style="left:157px;width:39px;text-align:center;top:52.76px;font-size:6.0px;color:#2f2f2f;">44,796</div>
  <div class="t" style="left:196px;width:36.5px;text-align:center;top:52.76px;font-size:6.0px;color:#2f2f2f;">0.58%</div>
  <div class="t" style="left:232.5px;width:40px;text-align:center;top:52.76px;font-size:6.0px;color:#2f2f2f;">156,276</div>
  <div class="t" style="left:272.5px;width:37px;text-align:center;top:52.76px;font-size:6.0px;color:#2f2f2f;">1.77%</div>
  <!-- row 4 -->
  <div style="left:157px;top:61.49px;width:75.5px;height:13.03px;background:linear-gradient(90deg,#f2f2f5 0,#f2f2f5 35%,#f2f2f5 65%,#f2f2f5 100%);"></div>
  <div style="left:232.5px;top:61.49px;width:77px;height:13.03px;background:linear-gradient(90deg,#f2f2f5 0,#f2f2f5 35%,#f2f2f5 65%,#f2f2f5 100%);"></div>
  <div class="t" style="left:4px;top:65.69px;font-size:6.0px;color:#333;">4</div>
  <div class="t" style="left:0;width:116.300px;text-align:right;top:65.39px;font-size:6.0px;color:#333;">อื่นๆ(นาเกลือ ทอผ้าไหม)</div>
  <svg style="left:121px;top:64.29px" width="10" height="7" viewBox="0 0 10 7"><path d="M.5 6.300L3.300 2l1.400 2L6.300 1.200 9.500 6.300z" fill="#eee" stroke="#999" stroke-width=".6" stroke-linejoin="round"/></svg>
  <div class="t" style="left:157px;width:39px;text-align:center;top:65.69px;font-size:6.0px;color:#2f2f2f;">421</div>
  <div class="t" style="left:196px;width:36.5px;text-align:center;top:65.69px;font-size:6.0px;color:#2f2f2f;">0.01%</div>
  <div class="t" style="left:232.5px;width:40px;text-align:center;top:65.69px;font-size:6.0px;color:#2f2f2f;">442</div>
  <div class="t" style="left:272.5px;width:37px;text-align:center;top:65.69px;font-size:6.0px;color:#2f2f2f;">0.01%</div>
  <!-- row 5 -->
  <div style="left:157px;top:74.42px;width:75.5px;height:13.03px;background:linear-gradient(90deg,#a7cba5 0,#a7cba5 35%,#b5d4b2 65%,#b5d4b2 100%);"></div>
  <div style="left:232.5px;top:74.42px;width:77px;height:13.03px;background:linear-gradient(90deg,#bcc8da 0,#bcc8da 35%,#c6d1e0 65%,#c6d1e0 100%);"></div>
  <div class="t" style="left:4px;top:78.62px;font-size:6.0px;color:#333;">5</div>
  <div class="t" style="left:0;width:116.300px;text-align:right;top:78.32px;font-size:6.0px;color:#333;">ปลูกพืช และ เลี้ยงสัตว์</div>
  <svg style="left:121px;top:77.22px" width="8.5" height="8.5" viewBox="0 0 7 8" preserveAspectRatio="none"><path d="M3.500 0L5.800 3H4.900L6.600 5.500H4V8H3V5.500H.4L2.100 3H1.200z" fill="#7fae6a"/></svg>
  <svg style="left:130.0px;top:77.22px" width="8.5" height="8.5" viewBox="0 0 8 8"><g fill="#8a5a3a"><ellipse cx="1.300" cy="3.300" rx="1" ry="1.300"/><ellipse cx="6.700" cy="3.300" rx="1" ry="1.300"/><ellipse cx="3" cy="1.600" rx="1" ry="1.400"/><ellipse cx="5" cy="1.600" rx="1" ry="1.400"/><path d="M4 3.600c-1.600 0-2.800 1.400-2.800 2.600 0 1.100 1 1.300 1.700 1 .5-.2.700-.3 1.100-.3s.6.100 1.100.3c.7.300 1.700.1 1.700-1 0-1.200-1.200-2.600-2.800-2.600z"/></g></svg>
  <div class="t" style="left:157px;width:39px;text-align:center;top:78.62px;font-size:6.0px;color:#2f2f2f;">2,168,207</div>
  <div class="t" style="left:196px;width:36.5px;text-align:center;top:78.62px;font-size:6.0px;color:#2f2f2f;">28.21%</div>
  <div class="t" style="left:232.5px;width:40px;text-align:center;top:78.62px;font-size:6.0px;color:#2f2f2f;">1,545,625</div>
  <div class="t" style="left:272.5px;width:37px;text-align:center;top:78.62px;font-size:6.0px;color:#2f2f2f;">17.50%</div>
  <!-- row 6 -->
  <div style="left:157px;top:87.35px;width:75.5px;height:13.03px;background:linear-gradient(90deg,#ecf1eb 0,#ecf1eb 35%,#eef2ed 65%,#eef2ed 100%);"></div>
  <div style="left:232.5px;top:87.35px;width:77px;height:13.03px;background:linear-gradient(90deg,#eceef2 0,#eceef2 35%,#eeeff3 65%,#eeeff3 100%);"></div>
  <div class="t" style="left:4px;top:91.55px;font-size:6.0px;color:#333;">6</div>
  <div class="t" style="left:0;width:116.300px;text-align:right;top:91.25px;font-size:6.0px;color:#333;">ปลูกพืช และ เพาะเลี้ยงสัตว์น้ำ</div>
  <svg style="left:121px;top:90.15px" width="8.5" height="8.5" viewBox="0 0 7 8" preserveAspectRatio="none"><path d="M3.500 0L5.800 3H4.900L6.600 5.500H4V8H3V5.500H.4L2.100 3H1.200z" fill="#7fae6a"/></svg>
  <svg style="left:130.0px;top:90.15px" width="10" height="7" viewBox="0 0 10 7"><path d="M.3 3.200Q2.500 2 4 2.300L6 .6l.6 1.700h2.300Q10 2.800 9.600 4 8.500 6.600 5 6.600 1.800 6.400.3 3.200z" fill="#3f8fd6"/></svg>
  <div class="t" style="left:157px;width:39px;text-align:center;top:91.55px;font-size:6.0px;color:#2f2f2f;">204,122</div>
  <div class="t" style="left:196px;width:36.5px;text-align:center;top:91.55px;font-size:6.0px;color:#2f2f2f;">2.66%</div>
  <div class="t" style="left:232.5px;width:40px;text-align:center;top:91.55px;font-size:6.0px;color:#2f2f2f;">208,933</div>
  <div class="t" style="left:272.5px;width:37px;text-align:center;top:91.55px;font-size:6.0px;color:#2f2f2f;">2.37%</div>
  <!-- row 7 -->
  <div style="left:157px;top:100.28px;width:75.5px;height:13.03px;background:linear-gradient(90deg,#f2f2f5 0,#f2f2f5 35%,#f2f2f5 65%,#f2f2f5 100%);"></div>
  <div style="left:232.5px;top:100.28px;width:77px;height:13.03px;background:linear-gradient(90deg,#f2f2f5 0,#f2f2f5 35%,#f2f2f5 65%,#f2f2f5 100%);"></div>
  <div class="t" style="left:4px;top:104.48px;font-size:6.0px;color:#333;">7</div>
  <div class="t" style="left:0;width:116.300px;text-align:right;top:104.18px;font-size:6.0px;color:#333;">ปลูกพืช และอื่นๆ</div>
  <svg style="left:121px;top:103.08px" width="8.5" height="8.5" viewBox="0 0 7 8" preserveAspectRatio="none"><path d="M3.500 0L5.800 3H4.900L6.600 5.500H4V8H3V5.500H.4L2.100 3H1.200z" fill="#7fae6a"/></svg>
  <svg style="left:130.0px;top:103.08px" width="10" height="7" viewBox="0 0 10 7"><path d="M.5 6.300L3.300 2l1.400 2L6.300 1.200 9.500 6.300z" fill="#eee" stroke="#999" stroke-width=".6" stroke-linejoin="round"/></svg>
  <div class="t" style="left:157px;width:39px;text-align:center;top:104.48px;font-size:6.0px;color:#2f2f2f;">100</div>
  <div class="t" style="left:196px;width:36.5px;text-align:center;top:104.48px;font-size:6.0px;color:#2f2f2f;">0.00%</div>
  <div class="t" style="left:232.5px;width:40px;text-align:center;top:104.48px;font-size:6.0px;color:#2f2f2f;">116</div>
  <div class="t" style="left:272.5px;width:37px;text-align:center;top:104.48px;font-size:6.0px;color:#2f2f2f;">0.00%</div>
  <!-- row 8 -->
  <div style="left:157px;top:113.21px;width:75.5px;height:13.03px;background:linear-gradient(90deg,#f2f3f2 0,#f2f3f2 35%,#f2f2f5 65%,#f2f2f5 100%);"></div>
  <div style="left:232.5px;top:113.21px;width:77px;height:13.03px;background:linear-gradient(90deg,#f2f2f3 0,#f2f2f3 35%,#f2f2f5 65%,#f2f2f5 100%);"></div>
  <div class="t" style="left:4px;top:117.41px;font-size:6.0px;color:#333;">8</div>
  <div class="t" style="left:0;width:116.300px;text-align:right;top:117.11px;font-size:6.0px;color:#333;">เลี้ยงสัตว์ และ เพาะเลี้ยงสัตว์น้ำ</div>
  <svg style="left:121px;top:116.01px" width="8.5" height="8.5" viewBox="0 0 8 8"><g fill="#8a5a3a"><ellipse cx="1.300" cy="3.300" rx="1" ry="1.300"/><ellipse cx="6.700" cy="3.300" rx="1" ry="1.300"/><ellipse cx="3" cy="1.600" rx="1" ry="1.400"/><ellipse cx="5" cy="1.600" rx="1" ry="1.400"/><path d="M4 3.600c-1.600 0-2.800 1.400-2.800 2.600 0 1.100 1 1.300 1.700 1 .5-.2.700-.3 1.100-.3s.6.100 1.100.3c.7.300 1.700.1 1.700-1 0-1.200-1.200-2.600-2.800-2.600z"/></g></svg>
  <svg style="left:130.0px;top:116.01px" width="10" height="7" viewBox="0 0 10 7"><path d="M.3 3.200Q2.500 2 4 2.300L6 .6l.6 1.700h2.300Q10 2.800 9.600 4 8.500 6.600 5 6.600 1.800 6.400.3 3.200z" fill="#3f8fd6"/></svg>
  <div class="t" style="left:157px;width:39px;text-align:center;top:117.41px;font-size:6.0px;color:#2f2f2f;">19,507</div>
  <div class="t" style="left:196px;width:36.5px;text-align:center;top:117.41px;font-size:6.0px;color:#2f2f2f;">0.25%</div>
  <div class="t" style="left:232.5px;width:40px;text-align:center;top:117.41px;font-size:6.0px;color:#2f2f2f;">37,241</div>
  <div class="t" style="left:272.5px;width:37px;text-align:center;top:117.41px;font-size:6.0px;color:#2f2f2f;">0.42%</div>
  <!-- row 9 -->
  <div style="left:157px;top:126.14px;width:75.5px;height:13.03px;background:linear-gradient(90deg,#f2f2f5 0,#f2f2f5 35%,#f2f2f5 65%,#f2f2f5 100%);"></div>
  <div style="left:232.5px;top:126.14px;width:77px;height:13.03px;background:linear-gradient(90deg,#f2f2f5 0,#f2f2f5 35%,#f2f2f5 65%,#f2f2f5 100%);"></div>
  <div class="t" style="left:4px;top:130.34px;font-size:6.0px;color:#333;">9</div>
  <div class="t" style="left:0;width:116.300px;text-align:right;top:130.04px;font-size:6.0px;color:#333;">เลี้ยงสัตว์ และอื่นๆ</div>
  <svg style="left:121px;top:128.94px" width="8.5" height="8.5" viewBox="0 0 8 8"><g fill="#8a5a3a"><ellipse cx="1.300" cy="3.300" rx="1" ry="1.300"/><ellipse cx="6.700" cy="3.300" rx="1" ry="1.300"/><ellipse cx="3" cy="1.600" rx="1" ry="1.400"/><ellipse cx="5" cy="1.600" rx="1" ry="1.400"/><path d="M4 3.600c-1.600 0-2.800 1.400-2.800 2.600 0 1.100 1 1.300 1.700 1 .5-.2.700-.3 1.100-.3s.6.100 1.100.3c.7.300 1.700.1 1.700-1 0-1.200-1.200-2.600-2.800-2.600z"/></g></svg>
  <svg style="left:130.0px;top:128.94px" width="10" height="7" viewBox="0 0 10 7"><path d="M.5 6.300L3.300 2l1.400 2L6.300 1.200 9.500 6.300z" fill="#eee" stroke="#999" stroke-width=".6" stroke-linejoin="round"/></svg>
  <div class="t" style="left:157px;width:39px;text-align:center;top:130.34px;font-size:6.0px;color:#2f2f2f;">58</div>
  <div class="t" style="left:196px;width:36.5px;text-align:center;top:130.34px;font-size:6.0px;color:#2f2f2f;">0.00%</div>
  <div class="t" style="left:232.5px;width:40px;text-align:center;top:130.34px;font-size:6.0px;color:#2f2f2f;">46</div>
  <div class="t" style="left:272.5px;width:37px;text-align:center;top:130.34px;font-size:6.0px;color:#2f2f2f;">0.00%</div>
  <!-- row 10 -->
  <div style="left:157px;top:139.07px;width:75.5px;height:13.03px;background:linear-gradient(90deg,#f2f2f5 0,#f2f2f5 35%,#f2f2f5 65%,#f2f2f5 100%);"></div>
  <div style="left:232.5px;top:139.07px;width:77px;height:13.03px;background:linear-gradient(90deg,#f2f2f5 0,#f2f2f5 35%,#f2f2f5 65%,#f2f2f5 100%);"></div>
  <div class="t" style="left:4px;top:143.27px;font-size:6.0px;color:#333;">10</div>
  <div class="t" style="left:0;width:116.300px;text-align:right;top:142.97px;font-size:6.0px;color:#333;">เพาะเลี้ยงสัตว์น้ำและอื่นๆ</div>
  <svg style="left:121px;top:141.87px" width="10" height="7" viewBox="0 0 10 7"><path d="M.3 3.200Q2.500 2 4 2.300L6 .6l.6 1.700h2.300Q10 2.800 9.600 4 8.500 6.600 5 6.600 1.800 6.400.3 3.200z" fill="#3f8fd6"/></svg>
  <svg style="left:131.5px;top:141.87px" width="10" height="7" viewBox="0 0 10 7"><path d="M.5 6.300L3.300 2l1.400 2L6.300 1.200 9.500 6.300z" fill="#eee" stroke="#999" stroke-width=".6" stroke-linejoin="round"/></svg>
  <div class="t" style="left:157px;width:39px;text-align:center;top:143.27px;font-size:6.0px;color:#2f2f2f;">106</div>
  <div class="t" style="left:196px;width:36.5px;text-align:center;top:143.27px;font-size:6.0px;color:#2f2f2f;">0.00%</div>
  <div class="t" style="left:232.5px;width:40px;text-align:center;top:143.27px;font-size:6.0px;color:#2f2f2f;">110</div>
  <div class="t" style="left:272.5px;width:37px;text-align:center;top:143.27px;font-size:6.0px;color:#2f2f2f;">0.00%</div>
  <!-- row 11 -->
  <div style="left:157px;top:152.00px;width:75.5px;height:13.03px;background:linear-gradient(90deg,#ecf1eb 0,#ecf1eb 35%,#eef2ed 65%,#eef2ed 100%);"></div>
  <div style="left:232.5px;top:152.00px;width:77px;height:13.03px;background:linear-gradient(90deg,#eff0f3 0,#eff0f3 35%,#f1f2f4 65%,#f1f2f4 100%);"></div>
  <div class="t" style="left:4px;top:156.20px;font-size:6.0px;color:#333;">11</div>
  <div class="t" style="left:0;width:116.300px;text-align:right;top:155.90px;font-size:6.0px;color:#333;">ปลูกพืช เลี้ยงสัตว์และเพาะเลี้ยงสัตว์น้ำ</div>
  <svg style="left:121px;top:154.8px" width="8.5" height="8.5" viewBox="0 0 7 8" preserveAspectRatio="none"><path d="M3.500 0L5.800 3H4.900L6.600 5.500H4V8H3V5.500H.4L2.100 3H1.200z" fill="#7fae6a"/></svg>
  <svg style="left:130.0px;top:154.8px" width="8.5" height="8.5" viewBox="0 0 8 8"><g fill="#8a5a3a"><ellipse cx="1.300" cy="3.300" rx="1" ry="1.300"/><ellipse cx="6.700" cy="3.300" rx="1" ry="1.300"/><ellipse cx="3" cy="1.600" rx="1" ry="1.400"/><ellipse cx="5" cy="1.600" rx="1" ry="1.400"/><path d="M4 3.600c-1.600 0-2.800 1.400-2.800 2.600 0 1.100 1 1.300 1.700 1 .5-.2.700-.3 1.100-.3s.6.100 1.100.3c.7.300 1.700.1 1.700-1 0-1.200-1.200-2.600-2.800-2.600z"/></g></svg>
  <svg style="left:139.0px;top:154.8px" width="10" height="7" viewBox="0 0 10 7"><path d="M.3 3.200Q2.500 2 4 2.300L6 .6l.6 1.700h2.300Q10 2.800 9.600 4 8.500 6.600 5 6.600 1.800 6.400.3 3.200z" fill="#3f8fd6"/></svg>
  <div class="t" style="left:157px;width:39px;text-align:center;top:156.20px;font-size:6.0px;color:#2f2f2f;">203,699</div>
  <div class="t" style="left:196px;width:36.5px;text-align:center;top:156.20px;font-size:6.0px;color:#2f2f2f;">2.65%</div>
  <div class="t" style="left:232.5px;width:40px;text-align:center;top:156.20px;font-size:6.0px;color:#2f2f2f;">126,142</div>
  <div class="t" style="left:272.5px;width:37px;text-align:center;top:156.20px;font-size:6.0px;color:#2f2f2f;">1.43%</div>
  <!-- row 12 -->
  <div style="left:157px;top:164.93px;width:75.5px;height:13.03px;background:linear-gradient(90deg,#f2f2f5 0,#f2f2f5 35%,#f2f2f5 65%,#f2f2f5 100%);"></div>
  <div style="left:232.5px;top:164.93px;width:77px;height:13.03px;background:linear-gradient(90deg,#f2f2f5 0,#f2f2f5 35%,#f2f2f5 65%,#f2f2f5 100%);"></div>
  <div class="t" style="left:4px;top:169.13px;font-size:6.0px;color:#333;">12</div>
  <div class="t" style="left:0;width:116.300px;text-align:right;top:168.83px;font-size:6.0px;color:#333;">ปลูกพืช เลี้ยงสัตว์และอื่นๆ</div>
  <svg style="left:121px;top:167.73px" width="8.5" height="8.5" viewBox="0 0 7 8" preserveAspectRatio="none"><path d="M3.500 0L5.800 3H4.900L6.600 5.500H4V8H3V5.500H.4L2.100 3H1.200z" fill="#7fae6a"/></svg>
  <svg style="left:130.0px;top:167.73px" width="8.5" height="8.5" viewBox="0 0 8 8"><g fill="#8a5a3a"><ellipse cx="1.300" cy="3.300" rx="1" ry="1.300"/><ellipse cx="6.700" cy="3.300" rx="1" ry="1.300"/><ellipse cx="3" cy="1.600" rx="1" ry="1.400"/><ellipse cx="5" cy="1.600" rx="1" ry="1.400"/><path d="M4 3.600c-1.600 0-2.800 1.400-2.800 2.600 0 1.100 1 1.300 1.700 1 .5-.2.700-.3 1.100-.3s.6.100 1.100.3c.7.300 1.700.1 1.700-1 0-1.200-1.200-2.600-2.800-2.600z"/></g></svg>
  <svg style="left:139.0px;top:167.73px" width="10" height="7" viewBox="0 0 10 7"><path d="M.5 6.300L3.300 2l1.400 2L6.300 1.200 9.500 6.300z" fill="#eee" stroke="#999" stroke-width=".6" stroke-linejoin="round"/></svg>
  <div class="t" style="left:157px;width:39px;text-align:center;top:169.13px;font-size:6.0px;color:#2f2f2f;">83</div>
  <div class="t" style="left:196px;width:36.5px;text-align:center;top:169.13px;font-size:6.0px;color:#2f2f2f;">0.00%</div>
  <div class="t" style="left:232.5px;width:40px;text-align:center;top:169.13px;font-size:6.0px;color:#2f2f2f;">44</div>
  <div class="t" style="left:272.5px;width:37px;text-align:center;top:169.13px;font-size:6.0px;color:#2f2f2f;">0.00%</div>
  <div class="t" style="left:124px;top:17.5px;font-size:5.400px;color:#333;">กลุ่มกิจกรรม</div>
  <div class="t b" style="left:157px;width:39px;text-align:center;top:17.5px;font-size:5.600px;color:#333;">จำนวนครัวเรือน</div>
  <div class="t b" style="left:196px;width:36.5px;text-align:center;top:17.5px;font-size:5.600px;color:#333;">สัดส่วน</div>
  <div class="t b" style="left:232.5px;width:40px;text-align:center;top:17.5px;font-size:5.600px;color:#333;">เกษตรกร(ราย)</div>
  <div class="t b" style="left:272.5px;width:37px;text-align:center;top:17.5px;font-size:5.600px;color:#333;">สัดส่วน</div>
 </div>
 <!-- ===== treemap cards ===== -->
 <div style="left:336px;top:146px;width:247px;height:107px;background:#fff;">
  <div class="t" style="left:7px;top:7.500px;font-size:6.700px;color:#444;">สัดส่วน <span class="b" style="color:#5c9455">จำนวนครัวเรือน</span> จำแนกตามกลุ่มกิจกรรม</div>
  <div style="left:8px;top:20px;width:126px;height:82.500px;background:#9bb59d;"></div>
  <div style="left:134.500px;top:20px;width:64.500px;height:82.500px;background:#aca5a0;"></div>
  <div style="left:199.500px;top:20px;width:39.500px;height:52.500px;background:#f9c98a;"></div>
  <div style="left:199.500px;top:73px;width:34px;height:15px;background:#8b99ae;"></div>
  <div style="left:199.500px;top:88.500px;width:34px;height:14px;background:#e6e1c6;"></div>
  <div style="left:234px;top:73px;width:5px;height:20px;background:#b7d7bd;"></div>
  <div style="left:234px;top:93.500px;width:5px;height:9px;background:#f3a57c;"></div>
  <div class="t b" style="left:10.500px;top:23px;font-size:6px;color:#222;">ปลูกพืช</div>
  <div class="t" style="left:10.500px;top:30px;font-size:6px;color:#222;">54.68%</div>
  <div class="t" style="left:10.500px;top:36.500px;font-size:6px;color:#222;">4,202,967 ครัวเรือน</div>
  <div class="t b" style="left:136.500px;top:23px;font-size:6px;color:#222;">ปลูกพืช และ เลี้ยงสัตว์</div>
  <div class="t" style="left:136.500px;top:30px;font-size:6px;color:#222;">28.21%</div>
  <div class="t" style="left:136.500px;top:36.500px;font-size:6px;color:#222;">2,168,207 ครัวเรือน</div>
  <div class="t b" style="left:202px;top:23px;font-size:6px;color:#222;">เลี้ยงสัตว์</div>
  <div class="t" style="left:202px;top:30px;font-size:6px;color:#222;">10.96%</div>
  <div class="t" style="left:202px;top:36.500px;font-size:6px;color:#222;">842,415</div>
  <div class="t" style="left:202px;top:43px;font-size:6px;color:#222;">ครัวเรือน</div>
 </div>
 <div style="left:336px;top:258px;width:247px;height:70px;background:#fff;">
  <div class="t" style="left:7px;top:11.500px;font-size:6.700px;color:#444;">สัดส่วน <span class="b" style="color:#5a78a0">จำนวนเกษตรกร</span> จำแนกตามกลุ่มกิจกรรม</div>
  <div style="left:8px;top:24px;width:128px;height:40px;background:#9bb59d;"></div>
  <div style="left:136.500px;top:24px;width:89px;height:40px;background:#f9c98a;"></div>
  <div style="left:226px;top:24px;width:13px;height:40px;background:#8b99ae;"></div>
  <div class="t b" style="left:10.500px;top:27px;font-size:6px;color:#222;">ปลูกพืช</div>
  <div class="t" style="left:10.500px;top:34px;font-size:6px;color:#222;">55.74%</div>
  <div class="t" style="left:10.500px;top:40.500px;font-size:6px;color:#222;">4,923,501 ราย</div>
  <div class="t b" style="left:139px;top:27px;font-size:6px;color:#222;">เลี้ยงสัตว์</div>
  <div class="t" style="left:139px;top:34px;font-size:6px;color:#222;">20.77%</div>
  <div class="t" style="left:139px;top:40.500px;font-size:6px;color:#222;">1,834,465 ราย</div>
 </div>
</div><!-- /chrome -->
<!-- ===== Chat panel ===== -->
<div id="chat">
 <div id="chead">
  <div class="t b" style="left:7px;top:10.700px;font-size:6.300px;color:#1f1f1f;">ประชุมชี้แจงการใช้งานระบบฐานข้อมูลสำนักงานเก...</div>
  <div style="left:155.500px;top:13.600px;width:1.200px;height:1.200px;border-radius:50%;background:#555;box-shadow:2.600px 0 0 #555,5.200px 0 0 #555;"></div>
  <svg style="left:169px;top:9.800px" width="8" height="8" viewBox="0 0 8 8"><path d="M3.300 1H1.800q-.8 0-.8.800v4.400q0 .8.800.8h4.400q.8 0 .8-.8V4.700" fill="none" stroke="#555" stroke-width=".8"/><path d="M4.800.8h2.400v2.400M7.200.8L3.800 4.200" fill="none" stroke="#555" stroke-width=".8"/></svg>
  <svg style="left:184px;top:10.800px" width="6" height="6" viewBox="0 0 6 6"><path d="M.5.500l5 5M5.500.500l-5 5" stroke="#555" stroke-width=".8"/></svg>
 </div>
 <!-- channel buttons -->
 <div style="left:6px;top:28.800px;width:23px;height:22.500px;border-radius:6.500px;border:1.500px solid #1668d0;background:#fff;"></div>
 <svg style="left:12.500px;top:35px" width="10.500" height="10" viewBox="0 0 22 21"><g fill="#1668d0"><ellipse cx="4" cy="8.500" rx="2.700" ry="3.300"/><ellipse cx="18" cy="8.500" rx="2.700" ry="3.300"/><ellipse cx="8.300" cy="4" rx="2.500" ry="3.200"/><ellipse cx="13.700" cy="4" rx="2.500" ry="3.200"/><path d="M11 9.800c-4 0-7 3.500-7 6.600 0 2.600 2.400 3.200 4.200 2.600 1.200-.4 1.800-.6 2.800-.6s1.600.2 2.800.6c1.800.6 4.200 0 4.200-2.600 0-3.100-3-6.600-7-6.600z"/></g></svg>
 <div class="t b" style="left:4.500px;top:54.500px;font-size:5.800px;color:#1668d0;">Everyone</div>
 <div style="left:34.500px;top:32px;width:1px;height:18px;background:#dcdcdc;"></div>
 <div style="left:40px;top:28.800px;width:22.500px;height:22.500px;border-radius:6.500px;border:1px solid #b5b5b5;background:#fff;"></div>
 <div style="left:48px;top:39.500px;width:6.500px;height:1.200px;background:#1668d0;"></div>
 <div style="left:50.700px;top:36.800px;width:1.200px;height:6.500px;background:#1668d0;"></div>
 <div class="t" style="left:40px;top:54.500px;font-size:5.800px;color:#333;">New chat</div>

 <!-- messages -->
 <div style="left:0;top:63px;width:198px;height:262px;overflow:hidden;">
  <div class="bub" style="left:24.500px;top:-10px;width:141px;height:43px;"></div>
  <div class="ct" style="left:30px;top:-2.800px;color:#3a3a3a;">Google Form</div>
  <div class="ct lnk" style="left:30px;top:7.800px;">https://forms.gle/9u2GdJD78dWtSRH</div>
  <div class="ct lnk" style="left:30px;top:18.300px;">9A</div>
  <!-- thread line -->
  <div style="left:24px;top:37px;width:1px;height:17px;background:#d9d9d9;"></div>
  <div style="left:23.500px;top:54px;width:1.500px;height:82px;background:#ebb4b4;"></div>
  <div style="left:24px;top:136px;width:1px;height:29px;background:#d9d9d9;"></div>
  <div class="t" style="left:31px;top:37.500px;font-size:6.400px;color:#2a6dc4;">Collapse all</div>
  <svg style="left:65.500px;top:39px" width="5" height="4" viewBox="0 0 5 4"><path d="M.6 3L2.500 1 4.400 3" fill="none" stroke="#2a6dc4" stroke-width=".8"/></svg>
  <div class="t" style="left:45px;top:55.300px;font-size:6.400px;color:#2a6dc4;">Montaka_<span style="font-size:5.600px">สนง.กษ.ปทุมธานี</span> <span style="color:#777;font-size:5.800px;">10:13</span></div>
  <div style="left:28px;top:62.500px;width:10px;height:10px;border-radius:2.500px;background:#f0a01e;"></div>
  <div class="t" style="left:30.700px;top:65px;font-size:5.200px;color:#fff;">M</div>
  <div class="bub" style="left:41.500px;top:62.800px;width:126.500px;height:61.500px;"></div>
  <div style="left:46.500px;top:68.500px;width:1px;height:40.500px;background:#9a9a9a;"></div>
  <div class="ct" style="left:51.500px;top:68.800px;color:#444;"><span class="th">แจ้งขอความประสงค์เป็น</span> Admin</div>
  <div class="ct" style="left:51.500px;top:79.300px;color:#444;"><span class="th">ระบบ ผ่าน</span> Google Form</div>
  <div class="ct lnk" style="left:51.500px;top:89.800px;">https://forms.gle/9u2GdJD78d</div>
  <div class="ct lnk" style="left:51.500px;top:100.300px;">WtSRH9A</div>
  <div class="t" style="left:46.500px;top:111.300px;font-size:7px;color:#222;">ขอบคุณค่ะ</div>
  <!-- reply box -->
  <div style="left:28px;top:134px;width:10px;height:10px;border-radius:50%;background:#3f8c4a;"></div>
  <div style="left:29.500px;top:135px;width:7px;height:7px;border-radius:50%;background:#5aa6dc;"></div>
  <div style="left:31px;top:136px;width:4px;height:6px;border-radius:2px 2px 1px 1px;background:#e4b62e;"></div>
  <div style="left:42px;top:129px;width:146.500px;height:36.500px;border:1px solid #cfcfcf;border-radius:5px;background:#fff;"></div>
  <div class="t" style="left:48px;top:135px;font-size:7px;color:#8a8a8a;">Reply...</div>
  <svg style="left:50px;top:148.500px" width="70" height="9" viewBox="0 0 70 9">
   <g fill="none" stroke="#777" stroke-width=".8">
    <path d="M1.500 2V1.200h5V2M4 1.200v6.300M3 7.500h2"/>
    <circle cx="19.500" cy="4.500" r="3.200"/><path d="M18 5.300q1.500 1.300 3 0"/>
    <path d="M32.500 1.200h3l2 2v4.600h-5z"/><path d="M35.500 1.200v2h2"/>
    <path d="M52.500 5.500V2.200q0-1-1-1h-3.500q-1 0-1 1v3.600q0 1 1 1h3"/><path d="M52.500 6.500v2M51.500 7.500h2"/>
    <path d="M60 3.800l1.500 1.500 1.500-1.500"/>
   </g>
   <circle cx="18.300" cy="3.800" r=".45" fill="#777"/><circle cx="20.700" cy="3.800" r=".45" fill="#777"/>
  </svg>
  <div style="left:170px;top:147.500px;width:12.500px;height:12px;border-radius:3px;background:#eeeef1;"></div>
  <svg style="left:173px;top:150.500px" width="7" height="6" viewBox="0 0 7 6"><path d="M.3.400h6.400L3.300 5.700 2.800 2.700z" fill="#8a8a8a"/><path d="M2.800 2.700L6.700.4" stroke="#eeeef1" stroke-width=".5"/></svg>

  <!-- message 3 -->
  <div class="t" style="left:28px;top:178.300px;font-size:5.500px;color:#2a6dc4;">กษม.ลำปาง -สารสนเทศการเกษตร <span style="color:#777;font-size:6px">10:12</span></div>
  <div style="left:9px;top:185.500px;width:12.300px;height:12px;border-radius:3px;background:#2b7bbf;"></div>
  <div class="t" style="left:12.200px;top:188.500px;font-size:6.500px;color:#fff;">ก</div>
  <div class="bub" style="left:25px;top:185px;width:141px;height:40.500px;"></div>
  <div class="ct" style="left:30px;top:191px;color:#1c1c1c;"><span class="th">ขอให้ข้อมูลเพิ่มเติมนนะครับ การนำเข้าข้อมูล</span></div>
  <div class="ct" style="left:30px;top:201.500px;color:#1c1c1c;"><span class="th">ในรูปแบบ</span> excel <span class="th">รูปแบบการจัดเก็บในฐาน</span></div>
  <div class="ct" style="left:30px;top:212px;color:#1c1c1c;"><span class="th">ข้อมูล กับ รูปแบบ</span> format <span class="th">จะไม่เหมือนกัน</span> 1</div>
  <div class="bub" style="left:25px;top:228px;width:32px;height:19px;"></div>
  <div class="ct" style="left:30px;top:234px;color:#1c1c1c;">100%</div>
  <svg style="left:28px;top:251px" width="42" height="8" viewBox="0 0 42 8">
   <g fill="none" stroke="#666" stroke-width=".7">
    <path d="M5.500 1h-3.500q-1 0-1 1v2.500q0 1 1 1h.5v1.500l1.800-1.500h2.200q1 0 1-1v-1"/><path d="M7.500.3v2.400M6.300 1.500h2.400"/>
    <circle cx="16.500" cy="4.200" r="3"/><path d="M15.200 5q1.300 1.200 2.600 0"/><path d="M19.500.3v2.400M18.300 1.500h2.400" />
   </g>
   <circle cx="15.500" cy="3.500" r=".4" fill="#666"/><circle cx="17.500" cy="3.500" r=".4" fill="#666"/>
   <circle cx="27.500" cy="4.200" r=".6" fill="#666"/><circle cx="29.700" cy="4.200" r=".6" fill="#666"/><circle cx="31.900" cy="4.200" r=".6" fill="#666"/>
  </svg>
  <!-- chat scrollbar -->
  <div style="left:189.500px;top:0;width:1px;height:262px;background:#ececec;"></div>
  <div style="left:191.500px;top:236px;width:3.500px;height:26px;border-radius:1.700px;background:#b9b9b9;"></div>
 </div>
 <!-- who can see -->
 <div style="left:0;top:325px;width:198px;height:12.500px;background:#f3f4f7;"></div>
 <svg style="left:35.500px;top:326.800px" width="8" height="8" viewBox="0 0 8 8"><circle cx="3.300" cy="2.300" r="1.500" fill="none" stroke="#666" stroke-width=".7"/><path d="M.6 7.200q.3-2.600 2.700-2.600 1 0 1.600.4" fill="none" stroke="#666" stroke-width=".7"/><circle cx="6" cy="6" r="1.500" fill="#1668d0"/></svg>
 <div class="t" style="left:44.800px;top:327.700px;font-size:6.100px;color:#555;">Who can see your messages? Recording on</div>
 <div class="t" style="left:6.500px;top:343.300px;font-size:7.600px;color:#8a8a8a;">Message everyone</div>
 <svg style="left:9px;top:385.500px" width="72" height="9" viewBox="0 0 72 9">
   <g fill="none" stroke="#777" stroke-width=".8">
    <path d="M1.500 2V1.200h5V2M4 1.200v6.300M3 7.500h2"/>
    <circle cx="21" cy="4.500" r="3.200"/><path d="M19.500 5.300q1.500 1.300 3 0"/>
    <path d="M35.500 1.200h3l2 2v4.600h-5z"/><path d="M38.500 1.200v2h2"/>
    <path d="M57.500 5.500V2.200q0-1-1-1H53q-1 0-1 1v3.600q0 1 1 1h3"/><path d="M57.500 6.500v2M56.500 7.500h2"/>
    <path d="M66 3.800l1.500 1.500 1.500-1.500"/>
   </g>
   <circle cx="19.800" cy="3.800" r=".45" fill="#777"/><circle cx="22.200" cy="3.800" r=".45" fill="#777"/>
 </svg>
 <div style="left:180px;top:384px;width:12.500px;height:12px;border-radius:3px;background:#eeeef1;"></div>
 <svg style="left:183px;top:387px" width="7" height="6" viewBox="0 0 7 6"><path d="M.3.400h6.400L3.300 5.700 2.800 2.700z" fill="#8a8a8a"/><path d="M2.800 2.700L6.700.4" stroke="#eeeef1" stroke-width=".5"/></svg>
</div>
<!-- ===== Taskbar ===== -->
<div id="task">
 <!-- windows -->
 <svg style="left:8px;top:7px" width="10" height="10" viewBox="0 0 10 10"><path d="M0 1.400L4.200.8v3.900H0zM4.800.7L10 0v4.700H4.800zM0 5.300h4.200v3.900L0 8.600zM4.800 5.300H10V10l-5.200-.7z" fill="#1a1a1a"/></svg>
 <svg style="left:33px;top:7px" width="9" height="10" viewBox="0 0 9 10"><circle cx="5.300" cy="3.700" r="2.900" fill="none" stroke="#1a1a1a" stroke-width=".9"/><path d="M3.300 5.900L.6 9.300" stroke="#1a1a1a" stroke-width="1"/></svg>
 <svg style="left:57px;top:7.500px" width="11" height="9" viewBox="0 0 11 9"><g fill="none" stroke="#1a1a1a" stroke-width=".8"><rect x="2.400" y="1.800" width="5" height="5.400"/><path d="M.5 1.500v6M9.200 1.200v1.500M9.200 3.800v1.500M9.200 6.400v1.500"/></g></svg>
 <!-- firefox -->
 <div style="left:83px;top:5px;width:12.500px;height:12.500px;border-radius:50%;background:radial-gradient(circle at 55% 45%,#7b3fe0 0,#8a3fd6 28%,#ff6a2a 42%,#ff9a1f 70%,#ffcf3a 100%);"></div>
 <div style="left:84px;top:6px;width:7px;height:5px;border-radius:50%;background:#ff8a1f;transform:rotate(-25deg);"></div>
 <!-- folder -->
 <div style="left:108px;top:6px;width:6px;height:3px;background:#e9a827;border-radius:1px 1px 0 0;"></div>
 <div style="left:108px;top:7.500px;width:13px;height:9.500px;background:#f7c643;border-radius:1px;"></div>
 <div style="left:110px;top:11px;width:9px;height:6px;background:#5aa9e6;"></div>
 <div style="left:108px;top:14px;width:13px;height:3px;background:#f2b83a;"></div>
 <!-- edge -->
 <div style="left:134px;top:5px;width:12.500px;height:12.500px;border-radius:50%;background:conic-gradient(from 200deg,#1a73c7,#2fb6d9,#5fd36a,#2fb6a9,#1464b4,#1a73c7);"></div>
 <div style="left:137.500px;top:9px;width:8px;height:6px;border-radius:50%;background:#e3e3e3;opacity:.0;"></div>
 <div style="left:137px;top:10px;width:8px;height:6.500px;border-radius:4px 4px 3px 6px;background:#0f5aa8;"></div>
 <div style="left:132px;top:20px;width:16px;height:1.500px;background:#4a90d9;"></div>
 <!-- line -->
 <div style="left:160px;top:5px;width:12.500px;height:12.500px;border-radius:3px;background:#06c755;"></div>
 <div style="left:162px;top:7.500px;width:8.500px;height:6.500px;border-radius:3.500px;background:#fff;"></div>
 <div class="t b" style="left:163px;top:9.200px;font-size:3px;color:#06c755;">LINE</div>
 <div style="left:158px;top:20px;width:16px;height:1.500px;background:#4a90d9;"></div>
 <!-- chrome -->
 <div style="left:186px;top:5px;width:12.500px;height:12.500px;border-radius:50%;background:conic-gradient(from -30deg,#ea4335 0 120deg,#fbbc05 120deg 240deg,#34a853 240deg 360deg);"></div>
 <div style="left:189.200px;top:8.200px;width:6px;height:6px;border-radius:50%;background:#fff;"></div>
 <div style="left:190.200px;top:9.200px;width:4px;height:4px;border-radius:50%;background:#4285f4;"></div>
 <!-- zoom -->
 <div style="left:212px;top:5px;width:12.500px;height:12.500px;border-radius:50%;background:#2d6df6;"></div>
 <div class="t b" style="left:213.800px;top:9.500px;font-size:3.400px;color:#fff;">zoom</div>
 <div style="left:210px;top:20px;width:16px;height:1.500px;background:#4a90d9;"></div>
 <!-- webex-like -->
 <div style="left:238px;top:5px;width:12.500px;height:12.500px;border-radius:3px;background:#111;"></div>
 <div style="left:239.500px;top:8px;width:5.500px;height:6px;border-radius:50%;border:1.400px solid #2bb7e6;"></div>
 <div style="left:243.500px;top:8px;width:5.500px;height:6px;border-radius:50%;border:1.400px solid #3fd28a;"></div>
 <div style="left:236px;top:20px;width:16px;height:1.500px;background:#4a90d9;"></div>
 <!-- excel -->
 <div style="left:263px;top:5px;width:13px;height:12.500px;background:#f4f7f4;border:1px solid #9fbfa8;"></div>
 <div style="left:269px;top:6.500px;width:6px;height:9.500px;background:repeating-linear-gradient(180deg,#cfe3d4 0 1px,#fff 1px 2.400px);"></div>
 <div class="t b" style="left:264.500px;top:7.500px;font-size:8px;color:#1f7a44;">X</div>
 <div style="left:262px;top:20px;width:16px;height:1.500px;background:#4a90d9;"></div>
 <!-- tray -->
 <svg style="left:646px;top:8px" width="8" height="6" viewBox="0 0 8 6"><path d="M.8 4.800L4 1.500l3.200 3.300" fill="none" stroke="#222" stroke-width=".9"/></svg>
 <svg style="left:659px;top:5.500px" width="62" height="11" viewBox="0 0 62 11">
  <g fill="none" stroke="#222" stroke-width=".8">
   <rect x="1.500" y="1.500" width="4.500" height="8" rx="1"/><path d="M6 4l2.500-1v5L6 7"/>
   <rect x="26" y="3.500" width="7" height="4" rx=".8"/><path d="M26 5.500h-1.500v-2"/>
   <rect x="38" y="2" width="8.500" height="6" /><path d="M40.500 9.500h3.500"/>
   <path d="M50.500 4.200h1.500l2-1.800v6.200l-2-1.800h-1.500z"/><path d="M55.500 3.500q1 2 0 4M57 2.500q1.600 3 0 6"/>
  </g>
  <rect x="14" y="1" width="3.600" height="6" rx="1.800" fill="#222"/><path d="M12.800 5q0 3 3 3t3-3M15.800 8v2" fill="none" stroke="#222" stroke-width=".8"/>
 </svg>
 <div class="t" style="left:724px;top:7.500px;font-size:5.300px;color:#222;">ไทย</div>
 <div class="t" style="left:748px;top:3px;font-size:5.900px;color:#222;">10:17</div>
 <div class="t" style="left:739.500px;top:13px;font-size:6.200px;color:#222;">17/11/2568</div>
 <svg style="left:779px;top:6.500px" width="9.800" height="9" viewBox="0 0 12 11"><path d="M.5.500h10v7.500h-5l-2.500 2.500v-2.500h-2.500z" fill="#1f1f1f"/><path d="M2.500 2.800h6M2.500 4.500h6M2.500 6.200h4" stroke="#e1e2e3" stroke-width=".6"/><circle cx="9.800" cy="8.500" r="2" fill="#1f1f1f" stroke="#e1e2e3" stroke-width=".5"/></svg>
</div>
</div>
</div>
</body>
</html>
